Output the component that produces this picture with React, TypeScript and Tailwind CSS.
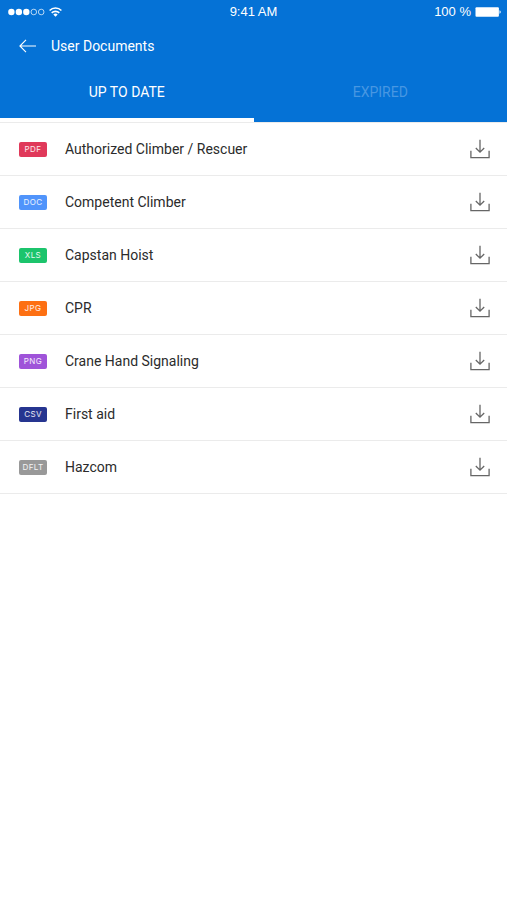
import { useState } from "react";

type Doc = { kind: string; name: string; tint: string };

const documents: Doc[] = [
  { kind: "PDF", name: "Authorized Climber / Rescuer", tint: "bg-[#e0395a]" },
  { kind: "DOC", name: "Competent Climber", tint: "bg-[#5094fb]" },
  { kind: "XLS", name: "Capstan Hoist", tint: "bg-[#1cc46c]" },
  { kind: "JPG", name: "CPR", tint: "bg-[#fd7013]" },
  { kind: "PNG", name: "Crane Hand Signaling", tint: "bg-[#9f53d9]" },
  { kind: "CSV", name: "First aid", tint: "bg-[#263590]" },
  { kind: "DFLT", name: "Hazcom", tint: "bg-[#999999]" },
];

function StatusBar() {
  return (
    <div className="grid h-6 grid-cols-3 items-center px-2 font-['Liberation_Sans',Arial,sans-serif] text-[13px]">
      <div className="flex items-center gap-1">
        <svg width="37" height="8" viewBox="0 0 37 8" aria-hidden="true">
          <circle cx="3.4" cy="4" r="3.2" fill="white" />
          <circle cx="10.9" cy="4" r="3.2" fill="white" />
          <circle cx="18.3" cy="4" r="3.2" fill="white" />
          <circle cx="25.8" cy="4" r="2.8" fill="none" stroke="white" strokeWidth="0.7" />
          <circle cx="33.2" cy="4" r="2.8" fill="none" stroke="white" strokeWidth="0.7" />
        </svg>
        <svg width="13" height="10" viewBox="0 0 13 10" fill="none" stroke="white" strokeWidth="1.6" aria-hidden="true">
          <path d="M0.6 3.5a8.3 8.3 0 0 1 11.8 0" />
          <path d="M2.7 5.9a5.4 5.4 0 0 1 7.6 0" />
          <path d="M6.5 9.7 4.3 7.5a3.1 3.1 0 0 1 4.4 0z" fill="white" stroke="none" />
        </svg>
      </div>
      <span className="text-center">9:41 AM</span>
      <div className="flex items-center justify-end gap-1">
        <span>100 %</span>
        <svg width="26" height="10" viewBox="0 0 26 10" className="-mr-0.5" aria-hidden="true">
          <rect x="0.5" y="0.2" width="23.4" height="9.6" rx="1" fill="white" />
          <path d="M24.5 3.3c1.6.5 1.6 2.9 0 3.4z" fill="white" />
        </svg>
      </div>
    </div>
  );
}

function DownloadIcon() {
  return (
    <svg width="20" height="20" viewBox="0 0 20 20" fill="none" stroke="#666666" strokeWidth="1.3" aria-hidden="true">
      <path d="M10 0.8v12.2M5.8 9 10 13.2l4.2-4.2" />
      <path d="M0.9 11.8v6.9h18.2v-6.9" />
    </svg>
  );
}

const tabs = ["UP TO DATE", "EXPIRED"];

export default function App() {
  const [active, setActive] = useState(0);
  return (
    <div className="min-h-screen bg-white font-[Roboto,'Liberation_Sans',sans-serif] text-sm text-[#2b2b2b]">
      <header className="bg-[#0572d6] text-white">
        <StatusBar />
        <div className="flex h-11 items-center gap-3 pr-5 pl-[17px]">
          <button type="button" aria-label="Back" className="p-0.5">
            <svg width="18" height="14" viewBox="0 0 18 14" fill="none" stroke="white" strokeWidth="1.1" aria-hidden="true">
              <path d="M17 7H1.2M7 0.8 0.9 7 7 13.2" />
            </svg>
          </button>
          <h1>User Documents</h1>
        </div>
        <div role="tablist" className="grid h-[54px] grid-cols-2">
          {tabs.map((label, i) => (
            <button
              key={label}
              type="button"
              role="tab"
              aria-selected={active === i}
              onClick={() => setActive(i)}
              className={
                active === i
                  ? "border-b-4 border-white pb-0.5 text-white"
                  : "border-b-4 border-transparent pb-0.5 text-[#4897e2]"
              }
            >
              {label}
            </button>
          ))}
        </div>
      </header>
      <ul className="border-t border-[#ebebeb]">
        {documents.map((doc) => (
          <li key={doc.kind} className="flex h-[53px] items-center border-b border-[#ebebeb] pr-[17px] pl-[19px]">
            <span
              className={`flex h-[15px] w-7 items-center justify-center rounded-xs pt-px font-[Inter,sans-serif] text-[8px] tracking-wider text-white/90 ${doc.tint}`}
            >
              {doc.kind}
            </span>
            <span className="ml-[18px] flex-1">{doc.name}</span>
            <button type="button" aria-label={`Download ${doc.name}`}>
              <DownloadIcon />
            </button>
          </li>
        ))}
      </ul>
    </div>
  );
}
